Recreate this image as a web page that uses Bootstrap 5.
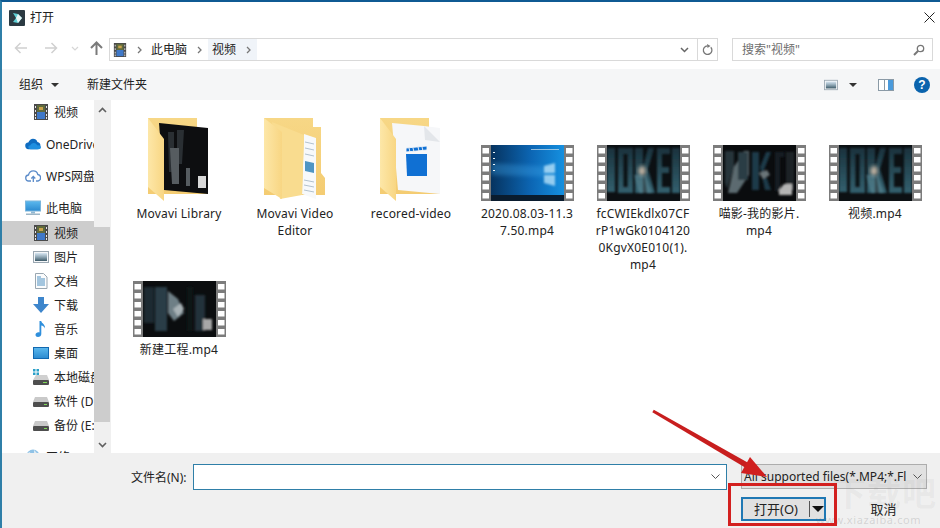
<!DOCTYPE html>
<html lang="zh-CN">
<head>
    <meta charset="UTF-8">
    <meta name="viewport" content="width=device-width, initial-scale=1.0">
    <title>打开</title>
    <link href="https://cdn.jsdelivr.net/npm/bootstrap@5.3.0/dist/css/bootstrap.min.css" rel="stylesheet">
    <style>
        html, body { margin: 0; width: 940px; height: 528px; overflow: hidden; background: #fff; }
        body { font-family: "Noto Sans", "Noto Sans CJK SC", sans-serif; font-size: 12px; color: #222; line-height: 17px; }
        .sprite { position: absolute; width: 0; height: 0; }
        .dlg { position: relative; width: 940px; height: 528px; border-top: 2px solid #0f5a93; border-left: 2px solid #2f7fa8; }

        .dlg-title { height: 31px; padding-left: 7px; gap: 5px; }
        .dlg-close { margin-left: auto; margin-right: 5px; }

        .addr-row { height: 23px; margin-top: 5px; }
        .nav-btns { width: 107px; }
        .nav-btn { position: absolute; top: 40px; }
        .addr-box { width: 609px; height: 23px; border: 1px solid #d9d9d9; }
        .addr-box svg { flex: none; }
        .addr-film { margin-left: 3px; }
        .chev-a { margin: 0 5px 0 10px; }
        .chev-b { margin: 0 6px; }
        .chev-c { margin-left: 10px; }
        .crumb { height: 21px; padding: 0 4px; }
        .crumb-on { background: #f0f4f9; padding-right: 6px; }
        .addr-end { margin-left: auto; width: 20px; height: 21px; border-left: 1px solid #d9d9d9; }
        .search-box { width: 201px; height: 23px; border: 1px solid #d9d9d9; margin-left: 14px; padding: 0 7px 0 9px; color: #6d6d6d; }

        .tool-row { height: 31px; margin-top: 8px; background: #f5f6f7; padding-left: 17px; }
        .tool-new { margin-left: 28px; }
        .tool-right { margin-left: auto; margin-right: 10px; }
        .caret-down { width: 0; height: 0; border-left: 4px solid transparent; border-right: 4px solid transparent; border-top: 4px solid #333; }
        .view-caret { margin: 0 21px 0 11px; }
        .view-pane { margin-right: 20px; }

        .main-row { height: 353px; }
        .side-pane { width: 92px; overflow: hidden; flex: none; }
        .side-item { height: 24px; white-space: nowrap; gap: 5px; }
        .side-item svg { width: 16px; height: 16px; flex: none; }
        .side-top { padding-left: 23px; margin-top: 8px; }
        .side-sub { padding-left: 31px; }
        .side-on { background: #cdcdcd; margin-top: 1px; }
        .side-first { margin-top: 0; }
        .scroll-bar { width: 16px; flex: none; background: #f0f0f0; }
        .scroll-btn { height: 20px; }
        .scroll-thumb { height: 195px; margin-top: 107px; background: #cdcdcd; }
        .scroll-btn-end { margin-top: auto; height: 20px; margin-bottom: -2px; }

        .file-pane { padding: 16px 0 0 10px; border-left: 1px solid #f0f0f0; flex: 1; overflow: hidden; }
        .tile-grid { display: grid; grid-template-columns: repeat(7, 116px); grid-template-rows: 158px auto; }
        .tile { text-align: center; white-space: nowrap; letter-spacing: .2px; }
        .tile-pic { height: 89px; display: flex; justify-content: center; align-items: flex-end; padding-bottom: 4px; }
        .tile-pic-low { height: 67px; }
        .tile-folder { margin-bottom: -1px; }
        .tile-row { grid-row: 2; }

        .foot { height: 75px; background: #f0f0f0; }
        .foot-a { padding: 11px 0 0 129px; height: 37px; }
        .foot-label { width: 62px; }
        .name-input { width: 534px; height: 26px; background: #fff; border: 1px solid #2f7fa8; padding-right: 6px; }
        .type-box { width: 186px; height: 25px; margin-left: 14px; background: #e1e1e1; border: 1px solid #adadad; padding: 0 4px 0 2px; white-space: nowrap; overflow: hidden; }
        .type-text { flex: 1; overflow: hidden; }
        .foot-b { padding: 7px 0 0 739px; }
        .open-btn { width: 85px; height: 24px; background: #e1e1e1; border: 2px solid #1f78b4; }
        .open-text { width: 66px; text-align: center; font-size: 13px; }
        .open-split { width: 1px; height: 16px; background: #555; }
        .open-caret { border-left: 6px solid transparent; border-right: 6px solid transparent; border-top: 6px solid #111; width: 0; height: 0; margin-left: 2px; }
        .cancel-btn { width: 87px; height: 24px; margin-left: 14px; background: transparent; font-size: 13px; }

        .help-dot { width: 16px; height: 16px; border-radius: 50%; background: #0a63ad; color: #fff; font: 700 12px/16px "Liberation Sans", sans-serif; text-align: center; }
        .overlay { position: absolute; left: -2px; top: -2px; pointer-events: none; }
        .wm-big { position: absolute; left: 830px; top: 468px; font-size: 34px; line-height: 44px; letter-spacing: 1px; color: rgba(120,120,120,.07); pointer-events: none; white-space: nowrap; font-family: "Noto Sans CJK SC", sans-serif; font-weight: 700; }
        .wm-small { position: absolute; left: 814px; top: 512px; font-size: 11px; line-height: 12px; letter-spacing: .6px; color: rgba(90,90,90,.2); pointer-events: none; white-space: nowrap; }
    </style>
</head>
<body>
<!-- icons and thumbnails -->
<svg class="sprite" xmlns="http://www.w3.org/2000/svg">
    <defs>
        <linearGradient id="gFlap" x1="0" y1="0" x2="1" y2="0"><stop offset="0" stop-color="#fde7a8"/><stop offset="1" stop-color="#f8d683"/></linearGradient>
        <linearGradient id="gBack" x1="0" y1="0" x2="0" y2="1"><stop offset="0" stop-color="#f7d786"/><stop offset="1" stop-color="#f4cc72"/></linearGradient>
        <linearGradient id="gDesk" x1="0" y1="0" x2="1" y2="0"><stop offset="0" stop-color="#06335f"/><stop offset=".55" stop-color="#0c66b4"/><stop offset="1" stop-color="#1590e0"/></linearGradient>
        <linearGradient id="gScreen" x1="0" y1="0" x2="0" y2="1"><stop offset="0" stop-color="#5cb9ee"/><stop offset="1" stop-color="#2b8ad0"/></linearGradient>
        <linearGradient id="gPic" x1="0" y1="0" x2="0" y2="1"><stop offset="0" stop-color="#d7e6f2"/><stop offset=".5" stop-color="#8fa7b5"/><stop offset="1" stop-color="#3d5a68"/></linearGradient>
        <linearGradient id="gLetter" x1="0" y1="0" x2="0" y2="1"><stop offset="0" stop-color="#1a323d"/><stop offset="1" stop-color="#33606e"/></linearGradient>
        <filter id="fBlur" x="-10%" y="-10%" width="120%" height="120%"><feGaussianBlur stdDeviation="1"/></filter>
        <filter id="fBlur2" x="-30%" y="-30%" width="160%" height="160%"><feGaussianBlur stdDeviation="2"/></filter>
    </defs>

    <symbol id="icVid" viewBox="0 0 16 16">
        <rect x="1" y="0" width="14" height="16" fill="#4a4a4a"/>
        <rect x="4" y="1" width="8" height="7" fill="#5f6a3c"/>
        <rect x="4" y="8" width="8" height="7" fill="#3f78c8"/>
        <path d="M6 3h4v3H6z" fill="#c9a24b"/>
        <path d="M2 2h1v2H2zM2 6h1v2H2zM2 10h1v2H2zM13 2h1v2h-1zM13 6h1v2h-1zM13 10h1v2h-1zM2 13h1v2H2zM13 13h1v2h-1z" fill="#e6e6e6"/>
    </symbol>
    <symbol id="icPic" viewBox="0 0 16 14">
        <rect x=".5" y="1.5" width="15" height="11" fill="#f4f6f8" stroke="#9aa7b1"/>
        <rect x="2" y="3" width="12" height="8" fill="url(#gPic)"/>
    </symbol>
    <symbol id="icDoc" viewBox="0 0 14 16">
        <path d="M1.500.5h8l3.500 3.500v11.500h-11.500z" fill="#fbfcfd" stroke="#9aa7b1"/>
        <path d="M3 6h8M3 8h8M3 10h8M3 12h8M3 4h4" stroke="#4d8fc0" stroke-width="1"/>
    </symbol>
    <symbol id="icDown" viewBox="0 0 16 16">
        <path d="M5 0h6v7h5l-8 9-8-9h5z" fill="#3e86cc"/>
    </symbol>
    <symbol id="icNote" viewBox="0 0 14 16">
        <path d="M5.500 0h1.700c.4 2.500 4.300 3.300 3.800 7.500-.6-1.800-2-2.700-3.700-3V13c0 1.800-1.500 3-3.300 3C2.600 16 1.500 15 1.500 13.700c0-1.500 1.500-2.500 3-2.500.4 0 .7 0 1 .2z" fill="#2f8fdc"/>
    </symbol>
    <symbol id="icDesk" viewBox="0 0 16 14">
        <rect x=".5" y="1.500" width="15" height="11" fill="url(#gScreen)" stroke="#1168b0"/>
    </symbol>
    <symbol id="icDrive" viewBox="0 0 16 12">
        <path d="M2 2h12l2 5H0z" fill="#c9c9c9"/>
        <rect x="0" y="7" width="16" height="5" rx="1" fill="#4e4e4e"/>
        <rect x="11" y="9" width="3" height="1" fill="#7ed957"/>
    </symbol>
    <symbol id="icDriveWin" viewBox="0 0 16 16">
        <path d="M0 0h2.500v2.500H0zM3.500 0H6v2.500H3.500zM0 3.500h2.500V6H0zM3.500 3.500H6V6H3.500z" fill="#2ba0c8"/>
        <path d="M3 6h11l2 5H0z" fill="#d0d0d0"/>
        <rect x="0" y="11" width="16" height="5" rx="1" fill="#4e4e4e"/>
        <rect x="10" y="13" width="4" height="1" fill="#7ed957"/>
    </symbol>
    <symbol id="icCloud" viewBox="0 0 17 11">
        <path d="M4 11a3.500 3.500 0 0 1-.5-7C4.500 1.500 6.500 0 8.500 0c2.300 0 4 1.300 4.700 3.300A3.900 3.900 0 0 1 13 11z" fill="#0f6cc0"/>
        <path d="M6 11c-1.500 0-2.500-1-2.500-2.200 0-1.200 1-2.100 2.200-2.100C6.500 5.300 8 4.500 9.500 4.500c1.400 0 2.700.8 3.300 2.200H14c1.700 0 3 1 3 2.200 0 1.200-1 2.100-2.500 2.100z" fill="#1f8fe0"/>
    </symbol>
    <symbol id="icWps" viewBox="0 0 16 13">
        <path d="M4 11.500a3 3 0 0 1-.5-6C4 3 6 1.300 8.300 1.300c2.200 0 4 1.500 4.500 3.700a3.300 3.300 0 0 1 .2 6.500h-2M4 11.500h2" fill="none" stroke="#5b8bc9" stroke-width="1.300"/>
        <path d="M8.300 12.500V7M6.300 9l2-2 2 2" fill="none" stroke="#5b8bc9" stroke-width="1.300"/>
    </symbol>
    <symbol id="icPc" viewBox="0 0 16 15">
        <rect x=".5" y=".5" width="15" height="10" fill="url(#gScreen)" stroke="#7ab5dc"/>
        <rect x="6" y="11" width="4" height="2" fill="#8fb8d3"/>
        <rect x="1" y="13" width="14" height="1.500" fill="#9db6c6"/>
    </symbol>
    <symbol id="icNet" viewBox="0 0 16 16">
        <circle cx="8" cy="7" r="6.500" fill="#8fc2e6"/>
        <path d="M4 3c2 1 3 2 2 4s-3 1-4 0M9 1c2 2 4 4 4 6-2 1-4 1-4-1s0-3 0-5z" fill="#dceaf4"/>
    </symbol>
    <symbol id="appLogo" viewBox="0 0 16 16">
        <rect width="16" height="16" rx="1" fill="#2b3a42"/>
        <path d="M4 3l5 1 4 4-4 5-5-1 3-4z" fill="#5ed0d6"/>
        <path d="M9 4l4 4-4 5-2-5z" fill="#e9f7f7"/>
    </symbol>

    <symbol id="filmFrame" viewBox="0 0 93 56">
        <path d="M0 0h10v56H0zM1.500 3v5.500H8V3zM1.500 12v5.500H8V12zM1.500 21v5.500H8V21zM1.500 30v5.500H8V30zM1.500 39v5.500H8V39zM1.500 48v5.500H8V48z" fill="#7c7c7c" fill-rule="evenodd"/>
        <path d="M83 0h10v56H83zM85 3v5.500h6.500V3zM85 12v5.500h6.500V12zM85 21v5.500h6.500V21zM85 30v5.500h6.500V30zM85 39v5.500h6.500V39zM85 48v5.500h6.500V48z" fill="#7c7c7c" fill-rule="evenodd"/>
    </symbol>

    <symbol id="thumbPoster" viewBox="0 0 93 56">
        <rect x="10" y="0" width="73" height="56" fill="#0c1013"/>
        <g filter="url(#fBlur)" fill="url(#gLetter)">
            <path d="M10 3h8v44h-8z"/>
            <path d="M21 3h15v45H21zM26.500 9v33h4V9z" fill-rule="evenodd"/>
            <path d="M38 3h8v45h-8zM46 22l5-19h6l-6 21 7 24h-8z"/>
            <path d="M60 3h13v6h-8v13h7v6h-7v14h8v6H60z"/>
            <path d="M75 3h8v45h-8z"/>
        </g>
        <ellipse cx="45" cy="26" rx="3.500" ry="5" fill="#d6c2ae" opacity=".95" filter="url(#fBlur2)"/>
        <path d="M37 30h12l6 18H42z" fill="#6fa0ad" opacity=".4" filter="url(#fBlur)"/>
    </symbol>
    <symbol id="thumbDark" viewBox="0 0 93 56">
        <rect x="10" y="0" width="73" height="56" fill="#0a0c0e"/>
        <g filter="url(#fBlur)">
            <path d="M12 6h9v16l-7 22-2-6z" fill="#26343b"/>
            <path d="M21 22l10-16h5v24l-12 18H15z" fill="#5c6b70"/>
            <path d="M25 7h10v28H25z" fill="#2b3d45"/>
            <path d="M39 7h7v38h-7zM47 22l6-15h5L51 25l7 20h-6z" fill="#1f3a4a"/>
            <path d="M62 7h9v5h-4v34h-5z" fill="#141c20"/>
            <path d="M73 7h8v38h-8z" fill="#1a2226"/>
            <path d="M66 45l5-6h8v11H66z" fill="#b4b4b4"/>
            <path d="M46 28l8-3 3 5-7 4z" fill="#6b7478"/>
        </g>
    </symbol>
    <symbol id="thumbWide" viewBox="0 0 93 56">
        <rect x="10" y="0" width="73" height="56" fill="#0b0d0f"/>
        <g filter="url(#fBlur)">
            <path d="M11 6h10v36H11z" fill="#1d2b31"/>
            <path d="M22 6h12v44H22z" fill="#2a3e47"/>
            <path d="M35 10l10 8 6 14-10 8-6-8z" fill="#6e7f86"/>
            <path d="M40 28l8-6 3 6-6 8z" fill="#a8b2b6"/>
            <path d="M54 6h6v44h-6z" fill="#0f1417"/>
            <path d="M62 14h10v36H62z" fill="#23323a"/>
            <path d="M70 38h9v11h-9z" fill="#a8a8a8"/>
        </g>
    </symbol>
    <symbol id="thumbDesk" viewBox="0 0 93 56">
        <rect x="10" y="0" width="73" height="56" fill="url(#gDesk)"/>
        <path d="M10 18l62 4v10l-62-2z" fill="#3fa6ea" opacity=".35" filter="url(#fBlur2)"/>
        <path d="M63 21l11-3v10H63zM63 30h11v11l-11-3z" fill="#bfe6fb" opacity=".75" filter="url(#fBlur)"/>
        <path d="M12 7h2v1h-2zM12 13h2v1h-2zM12 19h2v1h-2zM12 25h2v1h-2z" fill="#e8f2f8"/>
        <path d="M50 4h28v1H50z" fill="#cfe3ef" opacity=".7"/>
        <rect x="10" y="50" width="73" height="6" fill="#0a1c2e"/>
    </symbol>
</svg>

<div class="dlg">
    <div class="dlg-title d-flex align-items-center">
        <svg width="16" height="16"><use href="#appLogo"/></svg>
        <span>打开</span>
        <svg class="dlg-close" width="11" height="11" viewBox="0 0 11 11"><path d="M.5.5l10 10M10.500.5l-10 10" stroke="#222" stroke-width="1"/></svg>
    </div>

    <div class="addr-row d-flex">
        <div class="nav-btns">
            <svg class="nav-btn" style="left:12px" width="14" height="12" viewBox="0 0 14 12"><path d="M13 6H2M6.500 1L1.500 6l5 5" fill="none" stroke="#d0d0d0" stroke-width="1.500"/></svg>
            <svg class="nav-btn" style="left:42px" width="14" height="12" viewBox="0 0 14 12"><path d="M1 6h11M7.500 1l5 5-5 5" fill="none" stroke="#d0d0d0" stroke-width="1.500"/></svg>
            <svg class="nav-btn" style="left:69px;top:44px" width="8" height="5" viewBox="0 0 8 5"><path d="M1 1l3 3 3-3" fill="none" stroke="#d6d6d6" stroke-width="1.200"/></svg>
            <svg class="nav-btn" style="left:88px;top:39px" width="13" height="14" viewBox="0 0 13 14"><path d="M6.500 14V2M1 7l5.500-5.500L12 7" fill="none" stroke="#7a7a7a" stroke-width="2"/></svg>
        </div>
        <div class="addr-box d-flex align-items-center">
            <svg class="addr-film" width="14" height="16"><use href="#icVid"/></svg>
            <svg class="chev-a" width="5" height="8" viewBox="0 0 5 8"><path d="M1 1l3 3-3 3" fill="none" stroke="#777" stroke-width="1.300"/></svg>
            <span class="crumb d-flex align-items-center">此电脑</span>
            <svg class="chev-b" width="5" height="8" viewBox="0 0 5 8"><path d="M1 1l3 3-3 3" fill="none" stroke="#777" stroke-width="1.300"/></svg>
            <span class="crumb crumb-on d-flex align-items-center">视频
                <svg class="chev-c" width="5" height="8" viewBox="0 0 5 8"><path d="M1 1l3 3-3 3" fill="none" stroke="#777" stroke-width="1.300"/></svg>
            </span>
            <svg class="ms-auto me-2" width="9" height="6" viewBox="0 0 9 6"><path d="M1 1l3.500 3.500L8 1" fill="none" stroke="#666" stroke-width="1.500"/></svg>
            <div class="addr-end d-flex align-items-center justify-content-center m-0">
                <svg width="11" height="12" viewBox="0 0 11 12"><path d="M8.800 3.200A4.300 4.300 0 1 1 5.500 1.800" fill="none" stroke="#777" stroke-width="1.300"/><path d="M5 0l3.500 2L5.500 4z" fill="#777"/></svg>
            </div>
        </div>
        <div class="search-box d-flex align-items-center justify-content-between">
            <span>搜索"视频"</span>
            <svg width="12" height="12" viewBox="0 0 12 12"><circle cx="7.500" cy="4.500" r="3.200" fill="none" stroke="#777" stroke-width="1.300"/><path d="M5 7l-4 4" stroke="#777" stroke-width="2"/></svg>
        </div>
    </div>

    <div class="tool-row d-flex align-items-center">
        <span>组织</span>
        <span class="caret-down ms-2"></span>
        <span class="tool-new">新建文件夹</span>
        <div class="tool-right d-flex align-items-center">
            <svg width="14" height="12"><use href="#icPic"/></svg>
            <span class="caret-down view-caret"></span>
            <svg class="view-pane" width="16" height="12" viewBox="0 0 16 12"><rect x=".5" y=".5" width="15" height="11" fill="#fff" stroke="#8a9aa6"/><rect x="10" y="1" width="5" height="10" fill="#4a9adb"/><rect x="6" y="1" width="1" height="10" fill="#8a9aa6"/></svg>
            <div class="help-dot">?</div>
        </div>
    </div>

    <div class="main-row d-flex">
        <div class="side-pane">
            <div class="side-item side-sub side-first d-flex align-items-center"><svg><use href="#icVid"/></svg><span>视频</span></div>
            <div class="side-item side-top d-flex align-items-center"><svg><use href="#icCloud"/></svg><span>OneDrive</span></div>
            <div class="side-item side-top d-flex align-items-center"><svg><use href="#icWps"/></svg><span>WPS网盘</span></div>
            <div class="side-item side-top d-flex align-items-center"><svg><use href="#icPc"/></svg><span>此电脑</span></div>
            <div class="side-item side-sub side-on d-flex align-items-center"><svg><use href="#icVid"/></svg><span>视频</span></div>
            <div class="side-item side-sub d-flex align-items-center"><svg><use href="#icPic"/></svg><span>图片</span></div>
            <div class="side-item side-sub d-flex align-items-center"><svg><use href="#icDoc"/></svg><span>文档</span></div>
            <div class="side-item side-sub d-flex align-items-center"><svg><use href="#icDown"/></svg><span>下载</span></div>
            <div class="side-item side-sub d-flex align-items-center"><svg><use href="#icNote"/></svg><span>音乐</span></div>
            <div class="side-item side-sub d-flex align-items-center"><svg><use href="#icDesk"/></svg><span>桌面</span></div>
            <div class="side-item side-sub d-flex align-items-center"><svg><use href="#icDriveWin"/></svg><span>本地磁盘</span></div>
            <div class="side-item side-sub d-flex align-items-center"><svg><use href="#icDrive"/></svg><span>软件 (D:)</span></div>
            <div class="side-item side-sub d-flex align-items-center"><svg><use href="#icDrive"/></svg><span>备份 (E:)</span></div>
            <div class="side-item side-top d-flex align-items-center"><svg><use href="#icNet"/></svg><span>网络</span></div>
        </div>
        <div class="scroll-bar d-flex flex-column">
            <div class="scroll-btn d-flex align-items-center justify-content-center"><svg width="9" height="6" viewBox="0 0 9 6"><path d="M1 5l3.500-3.500L8 5" fill="none" stroke="#606060" stroke-width="1.600"/></svg></div>
            <div class="scroll-thumb"></div>
            <div class="scroll-btn-end d-flex align-items-center justify-content-center"><svg width="9" height="6" viewBox="0 0 9 6"><path d="M1 1l3.500 3.500L8 1" fill="none" stroke="#606060" stroke-width="1.600"/></svg></div>
        </div>
        <div class="file-pane">
            <div class="tile-grid">
                <div class="tile">
                    <div class="tile-pic">
                        <svg class="tile-folder" width="62" height="84" viewBox="0 0 62 84">
                            <path d="M0 0H49V10H60V76H0z" fill="url(#gBack)"/>
                            <path d="M11 5L60 10V76L16 72z" fill="#0d0e10"/>
                            <path d="M20 14h6v40h-5zM29 12h7l-2 34h-5z" fill="#2a2f33"/>
                            <path d="M22 30h9v36h-7zM38 50h4v18h-4z" fill="#565c60"/>
                            <path d="M50 58h8v12h-8z" fill="#d8d8d8"/>
                            <path d="M0 0L16 21V83L0 69z" fill="url(#gFlap)"/>
                        </svg>
                    </div>
                    Movavi Library
                </div>
                <div class="tile">
                    <div class="tile-pic">
                        <svg class="tile-folder" width="62" height="84" viewBox="0 0 62 84">
                            <path d="M0 0H49V9H57V55L61 60V77H0z" fill="url(#gBack)"/>
                            <path d="M40 16L52 20V81L38 76z" fill="#f7f9fb"/>
                            <path d="M41 24l9 2M41 30l9 2M41 36l9 2M40 62l10 2M40 67l10 2M40 72l10 2" stroke="#9fb3c2" stroke-width=".8"/>
                            <path d="M41 43l9 2v10l-9-2z" fill="#4f95c4"/>
                            <path d="M8 4L40 17L38 77L16 81z" fill="#f9dc8f"/>
                            <path d="M0 0L18 14V81L0 70z" fill="url(#gFlap)"/>
                        </svg>
                    </div>
                    Movavi Video<br>Editor
                </div>
                <div class="tile">
                    <div class="tile-pic">
                        <svg class="tile-folder" width="62" height="84" viewBox="0 0 62 84">
                            <path d="M0 0H49V10H60V76H0z" fill="url(#gBack)"/>
                            <path d="M12 5L44 8L60 10V76L18 72z" fill="#f6f7f9"/>
                            <path d="M44 8l1 14 15 2z" fill="#e3e6ea"/>
                            <path d="M26 36h21v22H27z" fill="#1070d3" />
                            <path d="M26 30l21-2 0 4-21 2zM29 30l1 4M33 30l1 4M38 29l1 4M42 29l1 4" fill="#1070d3" stroke="#f6f7f9" stroke-width=".9"/>
                            <path d="M0 0L16 21V83L0 69z" fill="url(#gFlap)"/>
                        </svg>
                    </div>
                    recored-video
                </div>
                <div class="tile">
                    <div class="tile-pic">
                        <svg width="93" height="56"><use href="#thumbDesk"/><use href="#filmFrame"/></svg>
                    </div>
                    2020.08.03-11.3<br>7.50.mp4
                </div>
                <div class="tile">
                    <div class="tile-pic">
                        <svg width="93" height="56"><use href="#thumbPoster"/><use href="#filmFrame"/></svg>
                    </div>
                    fcCWIEkdlx07CF<br>rP1wGk0104120<br>0KgvX0E010(1).<br>mp4
                </div>
                <div class="tile">
                    <div class="tile-pic">
                        <svg width="93" height="56"><use href="#thumbDark"/><use href="#filmFrame"/></svg>
                    </div>
                    喵影-我的影片.<br>mp4
                </div>
                <div class="tile">
                    <div class="tile-pic">
                        <svg width="93" height="56"><use href="#thumbPoster"/><use href="#filmFrame"/></svg>
                    </div>
                    视频.mp4
                </div>
                <div class="tile tile-row">
                    <div class="tile-pic tile-pic-low">
                        <svg width="93" height="56"><use href="#thumbWide"/><use href="#filmFrame"/></svg>
                    </div>
                    新建工程.mp4
                </div>
            </div>
        </div>
    </div>

    <div class="foot">
        <div class="foot-a d-flex">
            <div class="foot-label d-flex align-items-center">文件名(N):</div>
            <div class="name-input d-flex align-items-center justify-content-end">
                <svg width="9" height="6" viewBox="0 0 9 6"><path d="M.5.5l4 4 4-4" fill="none" stroke="#555"/></svg>
            </div>
            <div class="type-box d-flex align-items-center">
                <span class="type-text">All supported files(*.MP4;*.Fl</span>
                <svg width="9" height="6" viewBox="0 0 9 6"><path d="M.5.5l4 4 4-4" fill="none" stroke="#555"/></svg>
            </div>
        </div>
        <div class="foot-b d-flex">
            <div class="open-btn d-flex align-items-center">
                <span class="open-text">打开(O)</span>
                <span class="open-split"></span>
                <span class="open-caret"></span>
            </div>
            <div class="cancel-btn d-flex align-items-center justify-content-center">取消</div>
        </div>
    </div>

    <div class="wm-big">下载吧</div>
    <div class="wm-small">www.xiazaiba.com</div>

    <!-- red marks drawn on top of the dialog -->
    <svg class="overlay" width="940" height="528" viewBox="0 0 940 528">
        <rect x="729.500" y="484.500" width="106" height="40" fill="none" stroke="#d3201f" stroke-width="3"/>
        <path d="M652.300 412.300L653.800 409.700 756.500 467.400 753.500 472.600z" fill="#c81e1e"/>
        <path d="M767 477L750 457 741 473z" fill="#d01f1f"/>
    </svg>
</div>

<script src="https://cdn.jsdelivr.net/npm/bootstrap@5.3.0/dist/js/bootstrap.bundle.min.js"></script>
</body>
</html>
